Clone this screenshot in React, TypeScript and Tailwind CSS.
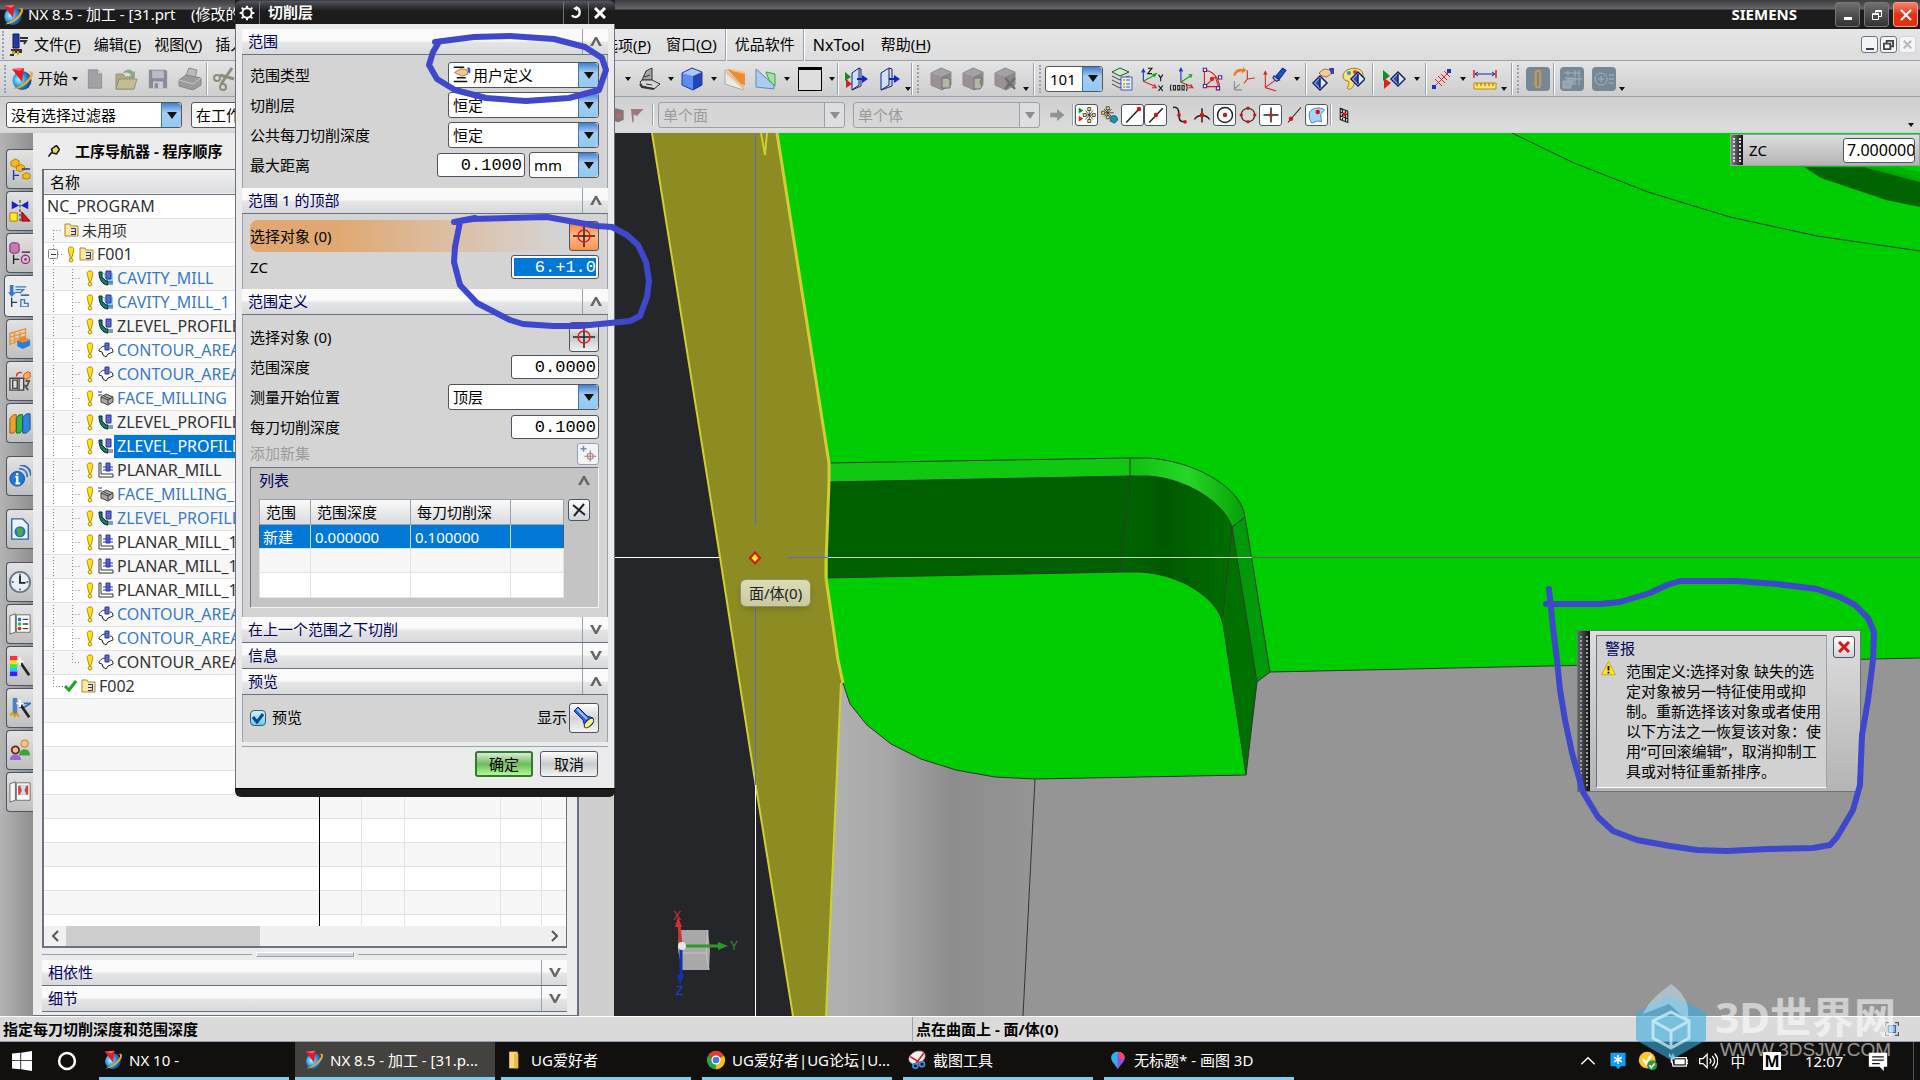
import type { ReactNode } from 'react'

type RowKind = 'root' | 'unused' | 'group' | 'op' | 'lastOp' | 'done' | 'empty'
type OpIcon = 'cavity' | 'zlevel' | 'contour' | 'face' | 'planar'

interface TreeRow {
  kind: RowKind
  label?: string
  icon?: OpIcon
  blue?: boolean
  selected?: boolean
}

const op = (icon: OpIcon, label: string, blue = false, selected = false): TreeRow => ({
  kind: 'op',
  icon,
  label,
  blue,
  selected,
})

const treeRows: TreeRow[] = [
  { kind: 'root', label: 'NC_PROGRAM' },
  { kind: 'unused', label: '未用项' },
  { kind: 'group', label: 'F001' },
  op('cavity', 'CAVITY_MILL', true),
  op('cavity', 'CAVITY_MILL_1', true),
  op('zlevel', 'ZLEVEL_PROFILE'),
  op('contour', 'CONTOUR_AREA', true),
  op('contour', 'CONTOUR_AREA', true),
  op('face', 'FACE_MILLING', true),
  op('zlevel', 'ZLEVEL_PROFILE_'),
  op('zlevel', 'ZLEVEL_PROFILE_', false, true),
  op('planar', 'PLANAR_MILL'),
  op('face', 'FACE_MILLING_C', true),
  op('zlevel', 'ZLEVEL_PROFILE_', true),
  op('planar', 'PLANAR_MILL_1'),
  op('planar', 'PLANAR_MILL_1'),
  op('planar', 'PLANAR_MILL_1'),
  op('contour', 'CONTOUR_AREA', true),
  op('contour', 'CONTOUR_AREA', true),
  { ...op('contour', 'CONTOUR_AREA'), kind: 'lastOp' },
  { kind: 'done', label: 'F002' },
  ...Array.from({ length: 10 }, (): TreeRow => ({ kind: 'empty' })),
]

function Icon({ children, className = 'size-6' }: { children: ReactNode; className?: string }) {
  return (
    <svg viewBox="0 0 24 24" className={`${className} shrink-0`} fill="none" aria-hidden="true">
      {children}
    </svg>
  )
}

function NxLogo({ className = 'size-6' }: { className?: string }) {
  return (
    <Icon className={className}>
      <defs>
        <radialGradient id="globe" cx="0.35" cy="0.45" r="0.7">
          <stop offset="0" stopColor="#bff4ff" />
          <stop offset="0.45" stopColor="#2ea3e6" />
          <stop offset="1" stopColor="#08306e" />
        </radialGradient>
      </defs>
      <circle cx="12" cy="13.500" r="9.500" fill="url(#globe)" />
      <path d="M3 22C10 23 22 15 23 7c0-3-3-3-5-2 3 0 3 2 2 4C17 15 9 20 3 22z" fill="#f5a623" />
      <path d="M2 2l12-1-2 14z" fill="#e01b2c" />
      <path d="M2 2l12-1-4 3z" fill="#ff6a6a" />
    </Icon>
  )
}

function Caret({ low = false }: { low?: boolean }) {
  return (
    <svg viewBox="0 0 6 4" className={low ? 'mt-5 h-1 w-1.5 shrink-0' : 'h-1 w-1.5 shrink-0'} aria-hidden="true">
      <path d="M0 0h6L3 4z" fill="#111" />
    </svg>
  )
}

function Grip() {
  return <span className="h-7 w-0 shrink-0 border-l-2 border-dotted border-gray-400" />
}

function Divider() {
  return <span className="h-8 w-0.5 shrink-0 border-l border-gray-400 border-r border-r-white" />
}

function ToolButton({
  label,
  w = 'w-[30px]',
  children,
}: {
  label: string
  w?: string
  children: ReactNode
}) {
  return (
    <button type="button" aria-label={label} className={`${w} flex shrink-0 items-center justify-center`}>
      {children}
    </button>
  )
}

function Combo({
  label,
  options,
  className,
  disabled = false,
  icon,
}: {
  label: string
  options: string[]
  className: string
  disabled?: boolean
  icon?: ReactNode
}) {
  return (
    <div
      className={`${className} relative h-[26px] shrink-0 rounded-[3px] border ${
        disabled ? 'border-gray-400 bg-[#d6d6d6]' : 'border-[#555] bg-white'
      }`}
    >
      {icon && <span className="pointer-events-none absolute top-0.5 left-1">{icon}</span>}
      <select
        aria-label={label}
        disabled={disabled}
        className={`h-6 w-full appearance-none bg-transparent pr-5 text-[15px] leading-[22px] outline-none ${
          icon ? 'pl-6' : 'pl-1'
        } ${disabled ? 'text-[#9a9a9a]' : 'text-black'}`}
      >
        {options.map((option) => (
          <option key={option}>{option}</option>
        ))}
      </select>
      <span
        className={`pointer-events-none absolute inset-y-0 right-0 flex w-5 items-center justify-center rounded-r-sm border-l ${
          disabled
            ? 'border-gray-400 bg-[#dedede]'
            : 'border-[#3a78b8] bg-linear-to-b from-[#3a80d2] via-[#a9ccf0] via-40% to-[#8ccbf5]'
        }`}
      >
        <svg viewBox="0 0 10 7" className="h-[7px] w-2.5">
          <path d="M0 0h10L5 7z" fill={disabled ? '#8d8d8d' : '#111'} />
        </svg>
      </span>
    </div>
  )
}

/* ---------- title bar and menus ---------- */

function TitleBar() {
  return (
    <header className="flex h-[29px] shrink-0 items-center bg-linear-to-b from-[#3d3d40] via-[#66666a] via-30% to-[#1c1c1c] to-36% px-0.5 text-white">
      <NxLogo className="h-[22px] w-[22px]" />
      <h1 className="ml-1 text-[15px] whitespace-pre">NX 8.5 - 加工 - [31.prt    (修改的</h1>
      <span className="ml-auto text-[15px] font-bold">SIEMENS</span>
      <div className="ml-[38px] flex gap-1">
        <button type="button" aria-label="最小化" className="flex h-[25px] w-[25px] items-center justify-center rounded-[3px] border border-[#777] bg-linear-to-b from-[#707070] to-[#333]">
          <span className="mt-2 h-[3px] w-2 bg-white" />
        </button>
        <button type="button" aria-label="还原" className="flex h-[25px] w-[25px] items-center justify-center rounded-[3px] border border-[#777] bg-linear-to-b from-[#707070] to-[#333]">
          <svg viewBox="0 0 12 12" className="size-3" fill="none" stroke="#fff">
            <path d="M1.500 4.500h6v6h-6zM4.500 4V1.500h6v6H8" />
            <path d="M1.500 5.500h6M4.500 2.500h6" />
          </svg>
        </button>
        <button type="button" aria-label="关闭" className="flex h-[25px] w-[25px] items-center justify-center rounded-[3px] border border-[#ff9d86] bg-linear-to-b from-[#f0806a] to-[#e03312] to-50%">
          <svg viewBox="0 0 12 12" className="size-3" stroke="#fff" strokeWidth="2">
            <path d="M1 1l10 10M11 1L1 11" />
          </svg>
        </button>
      </div>
    </header>
  )
}

function MenuItem({ text, hotkey }: { text: string; hotkey?: string }) {
  return (
    <button type="button" className="text-[15px] whitespace-nowrap">
      {text}
      {hotkey && (
        <>
          (<u className="underline-offset-2">{hotkey}</u>)
        </>
      )}
    </button>
  )
}

function MenuBar() {
  return (
    <nav className="flex h-8 shrink-0 items-center border-b border-gray-400 bg-linear-to-b from-[#e6e6e6] to-[#dcdcdc] pl-0.5 text-black">
      <Grip />
      <Icon className="ml-0.5 size-6">
        <path d="M7 1h6v14H7z" fill="#1f3d9c" stroke="#0a1a55" />
        <path d="M5 17h10v2H7v3H4" stroke="#333" strokeWidth="2" />
        <path d="M14 5h8M14 8h6l-2 3" stroke="#333" strokeWidth="2" />
        <path d="M6 18h3v3H6zM11 18h2v4h-2z" fill="#d9a400" />
      </Icon>
      <div className="ml-1 flex w-[617px] shrink-0 gap-[13px]">
        <MenuItem text="文件" hotkey="F" />
        <MenuItem text="编辑" hotkey="E" />
        <MenuItem text="视图" hotkey="V" />
        <MenuItem text="插入" />
        <span className="ml-auto">
          <MenuItem text="选项" hotkey="P" />
        </span>
      </div>
      <div className="ml-[15px] flex items-center gap-2">
        <MenuItem text="窗口" hotkey="O" />
        <Divider />
        <MenuItem text="优品软件" />
        <Divider />
        <button type="button" className="text-[16px]">
          NxTool
        </button>
        <span />
        <MenuItem text="帮助" hotkey="H" />
      </div>
      <div className="mr-1 ml-auto flex gap-0.5">
        <button type="button" aria-label="最小化文档" className="flex h-[17px] w-[17px] items-end justify-center rounded-[3px] border border-gray-500 bg-gray-100 pb-0.5">
          <span className="h-0.5 w-2 bg-gray-700" />
        </button>
        <button type="button" aria-label="还原文档" className="flex h-[17px] w-[17px] items-center justify-center rounded-[3px] border border-gray-500 bg-gray-100">
          <svg viewBox="0 0 12 12" className="size-[11px]" fill="none" stroke="#444" strokeWidth="2">
            <path d="M1 5h7v6H1zM4 4V2h7v6H9" />
          </svg>
        </button>
        <button type="button" aria-label="关闭文档" disabled className="flex h-[17px] w-[17px] items-center justify-center rounded-[3px] border border-gray-300 bg-gray-100">
          <svg viewBox="0 0 12 12" className="size-[9px]" stroke="#bbb" strokeWidth="3">
            <path d="M1 1l10 10M11 1L1 11" />
          </svg>
        </button>
      </div>
    </nav>
  )
}

/* ---------- toolbars ---------- */

function CubeIcon({ faded = false, mark }: { faded?: boolean; mark?: ReactNode }) {
  return (
    <Icon className="size-6">
      <path d="M2 6l10-5 10 4-9 4z" fill={faded ? '#a79fa6' : '#a9c4ff'} />
      <path d="M2 6l11 3v14L2 18z" fill={faded ? '#9a9097' : '#5d8cf5'} />
      <path d="M13 9l9-4v13l-9 5z" fill={faded ? '#8c8a80' : '#2146b8'} />
      <path d="M2 6l10-5 10 4v13l-9 5-11-5z" stroke={faded ? '#8d8a8b' : '#1b37a0'} />
      {mark}
    </Icon>
  )
}

function Axes({ children }: { children?: ReactNode }) {
  return (
    <Icon className="size-[26px]">
      <path d="M4 14V4M2.500 6L4 3l1.500 3" stroke="#1532c8" />
      <path d="M4 14l11-6M12 8l4-1-2 3" stroke="#0aa516" />
      <path d="M4 14l11 5M12 20l4 0-2-3" stroke="#e02020" />
      {children}
    </Icon>
  )
}

function Diamond({ x = 0, y = 0 }: { x?: number; y?: number }) {
  return (
    <g transform={`translate(${x} ${y})`}>
      <path d="M7 0l7 7-7 7-7-7z" fill="#dfeaff" stroke="#10206a" strokeWidth="1.500" />
      <path d="M7 2v10L2 7z" fill="#2850b8" />
      <path d="M7 2v10" stroke="#10206a" strokeWidth="1.500" />
    </g>
  )
}

function StandardToolbar() {
  return (
    <div className="flex h-9 shrink-0 items-center border-b border-gray-400 bg-linear-to-b from-[#e4e4e4] to-[#cdcdcd] pl-1 text-black">
      <Grip />
      <button type="button" className="ml-1 flex w-[68px] shrink-0 items-center gap-1 text-[15px] whitespace-nowrap">
        <NxLogo className="size-6" />
        <span>开始</span>
        <Caret />
      </button>
      <ToolButton label="新建" w="ml-[2px] w-[30px]">
        <Icon className="size-5">
          <path d="M4 1h11l5 5v17H4z" fill="#a1a2a8" stroke="#8b8c92" />
          <path d="M15 1v5h5" fill="#d5d6da" stroke="#8b8c92" />
        </Icon>
      </ToolButton>
      <ToolButton label="打开" w="w-8">
        <Icon className="size-6">
          <path d="M2 7h7l2 3h9v12H2z" fill="#b0aa84" stroke="#969070" />
          <path d="M5 12h18l-3 10H2z" fill="#c3bd95" stroke="#969070" />
          <path d="M9 6c2-4 8-5 10-1l2-1v6h-6l2-2c-2-3-5-3-8-2z" fill="#8ea68b" />
        </Icon>
      </ToolButton>
      <ToolButton label="保存" w="w-8">
        <Icon className="size-5">
          <path d="M1 1h20l2 2v20H1z" fill="#8a8d99" />
          <path d="M5 2h14v9H5z" fill="#b9bcc4" />
          <path d="M6 15h12v8H6z" fill="#c9cbd0" />
          <path d="M8 17h4v6H8z" fill="#8a8d99" />
        </Icon>
      </ToolButton>
      <ToolButton label="打印" w="w-8">
        <Icon className="size-6">
          <path d="M8 8l3-7 8 2-2 8z" fill="#b9b9b9" stroke="#8d8d8d" />
          <path d="M1 13l7-5 15 3v7l-8 5-14-4z" fill="#9b9b9b" stroke="#868686" />
          <path d="M1 13l14 4 8-6" stroke="#c7c7c7" />
        </Icon>
      </ToolButton>
      <Divider />
      <ToolButton label="剪切" w="w-8">
        <Icon className="size-6">
          <path d="M20 1L9 17M8 8l14 4" stroke="#8d8b7e" strokeWidth="3" />
          <circle cx="5" cy="11" r="3" stroke="#8d8b7e" strokeWidth="2" />
          <circle cx="11" cy="20" r="3" stroke="#8d8b7e" strokeWidth="2" />
        </Icon>
      </ToolButton>
      <div className="ml-[385px] flex items-center">
        <Caret />
        <ToolButton label="着色" w="ml-1 w-[30px]">
          <Icon className="size-6">
            <path d="M4 13l4-9 6-3v12z" fill="#a7a7a7" stroke="#333" />
            <path d="M2 15l2-2h10l8 4-6 5-12-3z" fill="#d5d5d5" stroke="#333" />
            <path d="M2 17l2 3 12 2" stroke="#333" strokeWidth="2" />
            <path d="M8 17l6 1M6 10l6-2" stroke="#333" />
          </Icon>
        </ToolButton>
        <ToolButton label="样式选项" w="w-3">
          <Caret />
        </ToolButton>
        <ToolButton label="视图方向" w="w-[30px]">
          <CubeIcon />
        </ToolButton>
        <ToolButton label="方向选项" w="w-3.5">
          <Caret />
        </ToolButton>
        <ToolButton label="剪切截面">
          <Icon className="size-6">
            <path d="M1 3l18 16v4L1 17z" fill="#e9e9e9" stroke="#aaa" />
            <path d="M3 2l5 1 13 3v12l-4-1z" fill="#f08a2a" />
            <path d="M8 3l13 3M3 2v4l16 15" stroke="#f7c38c" strokeWidth="2" />
          </Icon>
        </ToolButton>
        <ToolButton label="编辑截面" w="w-[30px]">
          <Icon className="size-6">
            <path d="M2 2l18 16v4L2 20z" fill="#a8cdf0" stroke="#5c8ab8" />
            <path d="M12 5l9 2v12l-6-6z" fill="#9fe2a4" stroke="#3ca34c" />
          </Icon>
        </ToolButton>
        <ToolButton label="截面选项" w="w-3">
          <Caret />
        </ToolButton>
        <ToolButton label="背景" w="w-[34px]">
          <span className="h-6 w-6 border border-t-[3px] border-black bg-[#dedede]" />
        </ToolButton>
        <ToolButton label="背景选项" w="w-2.5">
          <Caret />
        </ToolButton>
        <Divider />
        <ToolButton label="进入任务" w="w-[34px]">
          <Icon className="size-6">
            <path d="M1 5l6 5-6 4z" fill="#0c8d20" />
            <path d="M2 12l6 5-6 4z" fill="#d81f1f" />
            <path d="M8 6l7-5v17l-7 5z" fill="#cfe0ff" stroke="#15226e" />
            <path d="M15 1l2 1v17l-9 4" stroke="#15226e" />
            <path d="M13 12h6" stroke="#0b23d6" strokeWidth="2" />
            <path d="M18 8l6 4-6 4z" fill="#0b23d6" />
          </Icon>
        </ToolButton>
        <ToolButton label="退出任务" w="w-8">
          <Icon className="size-6">
            <path d="M4 6l8-5v17l-8 5z" fill="#cfe0ff" stroke="#15226e" />
            <path d="M12 1l3 1v17l-11 4" stroke="#15226e" />
            <path d="M12 12h6" stroke="#0b23d6" strokeWidth="2" />
            <path d="M17 8l6 4-6 4z" fill="#0b23d6" />
          </Icon>
        </ToolButton>
        <Caret low />
      </div>
      <div className="flex items-center gap-1">
        <Divider />
        <Grip />
        <ToolButton label="生成程序" w="ml-1 w-7">
          <CubeIcon faded mark={<path d="M13 11h6l2 2v8h-8z" fill="#b5b3aa" stroke="#6f6f6a" />} />
        </ToolButton>
        <ToolButton label="过切检查" w="w-7">
          <CubeIcon faded mark={<path d="M13 11h8l-2 4 2 4-2 3h-6z" fill="#b5b3aa" stroke="#6f6f6a" />} />
        </ToolButton>
        <ToolButton label="删除" w="w-7">
          <CubeIcon faded mark={<path d="M12 11l10 11M22 11L12 22" stroke="#6f6f6f" strokeWidth="2.500" />} />
        </ToolButton>
        <Caret low />
        <Divider />
        <Grip />
      </div>
      <Combo label="工作图层" options={['101']} className="ml-1 w-[58px]" />
      <div className="ml-1 flex items-center">
        <ToolButton label="图层设置">
          <Icon className="size-6">
            <path d="M2 5l8-4 9 4-9 4z" fill="#c7f0c9" stroke="#264c2b" />
            <path d="M2 9l8 4 9-4M2 13l8 4 6-3M2 17l8 4 3-2" stroke="#444" />
            <path d="M11 10h11v13H11z" fill="#e7edff" stroke="#4156b8" />
            <path d="M16 13h4M16 17h4M16 20h4" stroke="#4156b8" />
            <path d="M13 12h2v2h-2zM13 16h2v2h-2zM13 19h2v2h-2z" fill="#e2b400" />
          </Icon>
        </ToolButton>
        <ToolButton label="WCS 方向">
          <Axes>
            <path d="M8 2h4L8 7h4M18 8l2 3 2-3M20 11v3M18 18l4 5M22 18l-4 5" stroke="#111" />
          </Axes>
        </ToolButton>
        <ToolButton label="WCS 原点">
          <Icon className="size-[26px]">
            <path d="M11 15V3M9.500 5L11 2l1.500 3" stroke="#1532c8" />
            <path d="M11 15l9-6M18 8l3 0-1 3" stroke="#0aa516" />
            <path d="M11 15l10 4M18 20h4l-2-3" stroke="#e02020" />
            <path d="M2 17c-1 2-1 4 0 6M16 17c1 2 1 4 0 6M4 18h2v4H4zM8 18h2v4H8zM12 18h2v4h-2z" stroke="#222" />
          </Icon>
        </ToolButton>
        <ToolButton label="动态 WCS">
          <Icon className="size-[26px]">
            <path d="M5 4v15M5 4c9 1 13 8 14 15M5 19l10-9 3 9z" stroke="#c22" />
            <path d="M4 2h3v3H4zM4 17h3v3H4zM18 9h3v3h-3zM16 19h3v3h-3z" fill="#fff" stroke="#5a1d8a" />
            <circle cx="12" cy="12" r="2" fill="#d22" />
          </Icon>
        </ToolButton>
        <ToolButton label="旋转 WCS" w="w-8">
          <Icon className="size-[26px]">
            <path d="M16 12V4M16 12l7-1M16 12l-3 4" stroke="#e02a1a" />
            <path d="M4 22v-8M4 22l7 0M4 21l5-4" stroke="#888" />
            <path d="M3 9c1-6 5-7 9-6l0-2 3 3-4 3V5C8 5 6 6 5 9z" fill="#f37a1a" />
          </Icon>
        </ToolButton>
        <ToolButton label="显示 WCS">
          <Icon className="size-[26px]">
            <path d="M4 20V6M2.500 8L4 5l1.500 3M4 20l12-9M13 11l4-1-2 4M4 20l10 3" stroke="#e02020" />
            <path d="M14 9l6-7 3 2-6 8z" fill="#1f4fd2" stroke="#0b2a88" />
            <path d="M12 9l5 4-3 1-3-3z" fill="#8fd6ff" stroke="#0b2a88" />
          </Icon>
        </ToolButton>
        <ToolButton label="WCS 选项" w="w-4">
          <Caret />
        </ToolButton>
        <Divider />
        <ToolButton label="编辑显示" w="w-8">
          <Icon className="size-6">
            <Diamond x={2} y={9} />
            <path d="M8 6l5-4 6 1 2 3-5 4-5-1z" fill="#f5c99a" stroke="#a4713a" />
            <path d="M18 1l5 0v6l-3 0z" fill="#2747b8" />
          </Icon>
        </ToolButton>
        <ToolButton label="颜色" w="w-7">
          <Icon className="size-6">
            <path d="M2 9c0-9 20-11 20-1 0 7-8 5-9 9s-4 6-6 5 3-5 0-8c-3 0-5-2-5-5z" fill="#f6e07a" stroke="#a07d10" />
            <circle cx="8" cy="6" r="2" fill="#2c8ee8" />
            <circle cx="14" cy="5" r="2" fill="#e33" />
            <Diamond x={10} y={5} />
          </Icon>
        </ToolButton>
        <span className="flex w-3 justify-center">
          <Divider />
        </span>
        <ToolButton label="显示和隐藏">
          <Icon className="size-6">
            <path d="M1 3l7 6-7 5z" fill="#0d8d2b" />
            <path d="M2 11l7 5-7 6z" fill="#d22" />
            <Diamond x={9} y={5} />
          </Icon>
        </ToolButton>
        <ToolButton label="显示选项" w="w-4">
          <Caret />
        </ToolButton>
        <Divider />
        <ToolButton label="测量距离">
          <Icon className="size-6">
            <path d="M4 20L20 4" stroke="#c33" />
            <path d="M5 12l7 7M8 9l7 7M11 7l6 6M14 4l6 6" stroke="#d22" />
            <path d="M2 18h4v4H2zM17 2h4v4h-4z" fill="#1c30c8" />
          </Icon>
        </ToolButton>
        <ToolButton label="测量选项" w="w-3">
          <Caret />
        </ToolButton>
        <ToolButton label="简单距离" w="w-8">
          <Icon className="size-6">
            <path d="M1 3v8M23 3v8" stroke="#d22" strokeWidth="1.500" />
            <path d="M2 7h20M5 5L2 7l3 2M19 5l3 2-3 2" stroke="#1428b8" />
            <path d="M1 16h22v6H1z" fill="#ffe56b" stroke="#c08a00" />
            <path d="M4 16v3M8 16v3M12 16v3M16 16v3M20 16v3" stroke="#85641a" />
          </Icon>
        </ToolButton>
        <Caret low />
        <div className="ml-1 flex items-center gap-1">
          <Divider />
          <Grip />
        </div>
        <ToolButton label="模具" w="ml-1 w-[30px]">
          <Icon className="size-6">
            <rect width="24" height="24" rx="4" fill="#768896" />
            <rect x="8" y="2" width="8" height="20" rx="4" fill="#a99d7e" stroke="#8d8264" />
            <path d="M12 5v14" stroke="#8d8264" strokeWidth="2" />
          </Icon>
        </ToolButton>
        <Divider />
        <ToolButton label="电极" w="w-[34px]">
          <Icon className="size-6">
            <rect width="24" height="24" rx="4" fill="#768896" />
            <path d="M3 14h8v7H3zM5 11h8v7" stroke="#a4b1bc" fill="#93a2ae" />
            <path d="M4 6h16M8 3v6M15 3v15M19 3v15M13 12h9" stroke="#a4b1bc" />
          </Icon>
        </ToolButton>
        <ToolButton label="螺钉" w="w-[30px]">
          <Icon className="size-6">
            <rect width="24" height="24" rx="4" fill="#768896" />
            <circle cx="9" cy="12" r="6" stroke="#a4b1bc" />
            <path d="M6 12h6M9 9v6M17 8h5M17 12h5M17 16h5" stroke="#a4b1bc" />
          </Icon>
        </ToolButton>
        <Caret low />
      </div>
    </div>
  )
}

function SnapToggle({ label, pressed = false, children }: { label: string; pressed?: boolean; children: ReactNode }) {
  return (
    <button
      type="button"
      aria-label={label}
      aria-pressed={pressed}
      className={`flex h-[22px] w-[23px] shrink-0 items-center justify-center ${
        pressed ? 'rounded-[3px] border border-gray-600 bg-white' : ''
      }`}
    >
      <Icon className="size-[18px]">{children}</Icon>
    </button>
  )
}

function SelectionBar() {
  return (
    <div className="flex h-9 shrink-0 items-center border-b-2 border-gray-300 bg-linear-to-b from-[#cfcfcf] to-[#dcdcdc] pt-0.5 pl-1.5">
      <Combo label="类型过滤器" options={['没有选择过滤器']} className="w-[176px]" />
      <Combo label="选择范围" options={['在工作部件内']} className="ml-[9px] w-[176px]" />
      <div className="ml-[242px] flex items-center">
        <Icon className="size-4">
          <path d="M2 6l8-4 12 3v14l-8 4-12-4z" fill="#7f7777" />
          <circle cx="15" cy="13" r="4" fill="#b36a72" />
        </Icon>
        <Icon className="ml-1 size-4">
          <path d="M3 3h19l-9 9v2L7 11v12H5z" fill="#a07680" />
        </Icon>
      </div>
      <span className="ml-[7px]">
        <Divider />
      </span>
      <Combo label="面规则" options={['单个面']} disabled className="ml-1 w-[187px]" />
      <Combo label="体规则" options={['单个体']} disabled className="ml-2 w-[187px]" />
      <Icon className="ml-2 size-[18px]">
        <path d="M3 9h9V4l10 8-10 8v-5H3z" fill="#8c9494" />
      </Icon>
      <span className="ml-1.5">
        <Divider />
      </span>
      <div className="ml-px flex items-center">
        <SnapToggle label="启用捕捉点" pressed>
          <path d="M1 2l6 4-6 4z" fill="#0a8f1d" />
          <path d="M1 13l6 4-6 4z" fill="#d22" />
          <path d="M15 2v20M7 12h16M10 6l10 12M20 6L10 18" stroke="#222" />
          <path d="M13 2h4v4h-4zM13 18h4v4h-4zM7 10h4v4H7zM19 10h4v4h-4z" fill="#ffe45a" stroke="#222" />
        </SnapToggle>
        <SnapToggle label="清除捕捉点">
          <path d="M9 1v16M1 9h16M4 4l10 10M14 4L4 14" stroke="#222" />
          <path d="M7 1h4v4H7zM1 7h4v4H1zM7 13h4v4H7z" fill="#ffe45a" stroke="#222" />
          <path d="M13 14c5-3 10 0 9 5l-4 4-6-3z" fill="#1f8fa5" stroke="#0b5261" />
        </SnapToggle>
        <SnapToggle label="终点" pressed>
          <path d="M3 22L20 4" stroke="#222" strokeWidth="2" />
          <circle cx="20" cy="4" r="3" fill="#d11" />
        </SnapToggle>
        <SnapToggle label="中点" pressed>
          <path d="M3 22L21 3" stroke="#222" strokeWidth="2" />
          <circle cx="12" cy="12" r="3" fill="#d11" />
        </SnapToggle>
        <SnapToggle label="控制点">
          <path d="M4 2c6-1 8 2 8 10s2 9 8 9" stroke="#222" strokeWidth="2" />
          <circle cx="12" cy="12" r="2.500" fill="#d11" />
          <circle cx="20" cy="21" r="2.500" fill="#d11" />
        </SnapToggle>
        <SnapToggle label="交点">
          <path d="M12 3v19M2 18c4-7 16-7 20 0" stroke="#222" strokeWidth="2" />
          <circle cx="12" cy="12" r="3" fill="#d11" />
        </SnapToggle>
        <SnapToggle label="圆弧中心" pressed>
          <circle cx="12" cy="12" r="10" stroke="#222" strokeWidth="2" />
          <circle cx="12" cy="12" r="3" fill="#d11" />
        </SnapToggle>
        <SnapToggle label="象限点">
          <circle cx="12" cy="12" r="9" stroke="#222" strokeWidth="1.500" />
          <path d="M10 1h4v4h-4zM10 19h4v4h-4zM1 10h4v4H1zM19 10h4v4h-4z" fill="#d11" />
        </SnapToggle>
        <SnapToggle label="现有点" pressed>
          <path d="M12 2v20M2 12h20" stroke="#222" strokeWidth="2" />
          <circle cx="12" cy="12" r="2.500" fill="#d11" />
        </SnapToggle>
        <SnapToggle label="曲线上的点">
          <path d="M4 22L21 2" stroke="#222" strokeWidth="1.500" />
          <circle cx="8" cy="17" r="3" fill="#d11" />
        </SnapToggle>
        <SnapToggle label="面上的点" pressed>
          <path d="M2 8c5-6 13-7 20-3l-5 6 1 10c-5-2-9 0-13 2-3-4-4-9-3-15z" fill="#a9d2fa" stroke="#2c62b0" />
          <circle cx="13" cy="8" r="3" fill="#d11" />
        </SnapToggle>
        <span className="ml-0.5">
          <Divider />
        </span>
        <SnapToggle label="有界栅格">
          <path d="M7 3l10 4v15L7 18zM10 4v15M14 6v15M7 8l10 4M7 13l10 4" stroke="#222" strokeWidth="1.500" />
          <circle cx="13" cy="11" r="2.500" fill="#d11" />
        </SnapToggle>
      </div>
      <span className="mr-1.5 ml-auto">
        <Caret low />
      </span>
    </div>
  )
}

/* ---------- resource bar ---------- */

const resourceIcons: Record<string, ReactNode> = {
  装配导航器: (
    <>
      <path d="M2 4l5-3 4 2v5l-5 2-4-2zM8 9l5-2 4 2v4l-5 2-4-2z" fill="#f6b81c" stroke="#b67800" />
      <path d="M15 18l4-2 4 2v4l-4 1-4-1z" fill="#f6b81c" stroke="#b67800" />
      <path d="M5 13v11M5 19h6M14 12h9" stroke="#223a9e" strokeWidth="1.500" />
    </>
  ),
  约束导航器: (
    <>
      <path d="M3 1v9l8-4zM21 1v9l-8-4z" fill="#1820d0" />
      <path d="M12 0v24" stroke="#111" strokeDasharray="3 2" />
      <path d="M1 14h8v9H1z" fill="#ffe92b" stroke="#c26a00" />
      <path d="M14 13v10h9z" fill="#d5161c" stroke="#700" />
    </>
  ),
  部件导航器: (
    <>
      <path d="M1 3c0-3 10-3 10 0v7c0 3-10 3-10 0z" fill="#c87ab4" stroke="#7a1d64" />
      <path d="M5 14v10M5 19h6M14 11h9" stroke="#223" strokeWidth="1.500" />
      <circle cx="18" cy="19" r="4.500" stroke="#a02882" strokeWidth="1.500" />
      <circle cx="18" cy="19" r="1.500" fill="#a02882" />
    </>
  ),
  工序导航器: (
    <>
      <path d="M2 0h4v8h3l-5 5-4-5h2z" fill="#3c78c8" />
      <path d="M8 2h12M8 5h9l-4 4M8 8h5" stroke="#3c78c8" strokeWidth="1.500" />
      <path d="M4 14v10M4 19h6M14 11h9" stroke="#223a6e" strokeWidth="1.500" />
      <path d="M14 16h4v4h4v4h-8z" stroke="#3c78c8" strokeWidth="1.500" />
    </>
  ),
  加工特征: (
    <>
      <path d="M1 6l17-5v9L1 18zM1 10l17-5M1 14l17-5M6 5v12M12 3v12" stroke="#f09228" strokeWidth="1.500" />
      <path d="M9 14l8-4 6 3v6l-8 4-6-3z" fill="#2a7dda" />
      <path d="M9 14l8-4 6 3-8 3z" fill="#f38a28" />
    </>
  ),
  机床导航器: (
    <>
      <path d="M1 9h15v13H1zM4 11h5v9H4zM11 9v13" fill="#ddd" stroke="#444" strokeWidth="1.500" />
      <path d="M16 5l4-3 3 1v5l-4 2-3-1z" fill="#ffb45c" stroke="#d3441a" />
      <path d="M8 7c0-4 4-5 6-4" stroke="#d22" strokeWidth="1.500" />
      <path d="M18 12h4l-2 5h-3l4 5" stroke="#555" strokeWidth="2" />
    </>
  ),
  重用库: (
    <>
      <path d="M1 7l4-4h3v16l-3 4H1z" fill="#f0a02a" stroke="#9a5600" />
      <path d="M8 7l3-4h4v16l-3 4H8z" fill="#35b54a" stroke="#126a22" />
      <path d="M15 6l4-4h4v17l-4 4h-4z" fill="#2f86dc" stroke="#0f4a8f" />
    </>
  ),
  'HD3D 工具': (
    <>
      <circle cx="9" cy="15" r="8" fill="#1f78d8" stroke="#0f4c9a" />
      <path d="M9 9v2M7 13h2v7M7 20h5" stroke="#fff" strokeWidth="2.500" />
      <path d="M11 4c6 0 9 4 9 9M12 0c8 0 12 6 12 12" stroke="#2f6fc0" strokeWidth="2" />
    </>
  ),
  浏览器: (
    <>
      <path d="M3 1h12l6 6v16H3z" fill="#eef5ff" stroke="#2f62a8" strokeWidth="1.500" />
      <circle cx="12" cy="15" r="6" fill="#2a6fc8" />
      <path d="M8 12l4-2 4 3-2 6-4 1z" fill="#42b04a" />
    </>
  ),
  历史记录: (
    <>
      <circle cx="12" cy="12" r="11" fill="#eaf0fa" stroke="#6a7688" strokeWidth="2" />
      <path d="M12 3v2M12 19v2M3 12h2M19 12h2" stroke="#333" strokeWidth="1.500" />
      <path d="M12 5v8h6" stroke="#222" strokeWidth="2" />
    </>
  ),
  系统材料: (
    <>
      <path d="M1 3l6-2v20l-6 2z" fill="#f5f5f5" stroke="#666" />
      <path d="M8 2h15v19H8z" fill="#fff" stroke="#666" />
      <path d="M15 7h6M15 12h6M15 17h6" stroke="#444" strokeWidth="1.500" />
      <circle cx="11.500" cy="7" r="2" fill="#2c6ee0" />
      <circle cx="11.500" cy="12" r="2" fill="#2dbb3a" />
      <circle cx="11.500" cy="17" r="2" fill="#e22" />
    </>
  ),
  可视化: (
    <>
      <path d="M1 1h8v5H1z" fill="#f33" />
      <path d="M1 6h8v4H1z" fill="#fd2" />
      <path d="M1 10h8v4H1z" fill="#3e3" />
      <path d="M1 14h8v4H1z" fill="#1cf" />
      <path d="M1 18h8v5H1z" fill="#32f" />
      <path d="M13 9l9 13" stroke="#222" strokeWidth="3" />
      <path d="M12 3v8M8 7h8" stroke="#fff" strokeWidth="2" />
    </>
  ),
  加工向导: (
    <>
      <path d="M4 1h5v18H4z" fill="#4a82c8" />
      <path d="M10 7h13l-6 4h-6" stroke="#3c6ec0" strokeWidth="2" />
      <path d="M1 20l3-3 2 4 3-3 2 4" stroke="#d9a400" strokeWidth="2" />
      <path d="M13 9l9 13" stroke="#222" strokeWidth="3" />
      <path d="M12 3v8M8 7h8" stroke="#fff" strokeWidth="2" />
    </>
  ),
  角色: (
    <>
      <circle cx="17" cy="5" r="4" fill="#f6c488" stroke="#b87a1a" />
      <path d="M11 18c0-9 12-9 12 0z" fill="#3ba53b" />
      <circle cx="7" cy="12" r="4" fill="#f5b98a" stroke="#5a3020" strokeWidth="2" />
      <path d="M1 23c0-8 12-8 12 0z" fill="#9868d8" />
    </>
  ),
  主题: (
    <>
      <path d="M1 3l6-2v20l-6 2z" fill="#f5f5f5" stroke="#666" />
      <path d="M8 2h15v19H8z" fill="#fff" stroke="#666" />
      <path d="M10 5h11v10H10z" fill="#e53b2c" />
      <path d="M12 5h7l-2 5 2 5h-7l2-5z" fill="#bfe2ff" />
    </>
  ),
}

function ResourceBar() {
  return (
    <div className="flex w-[33px] shrink-0 flex-col items-end gap-0.5 bg-linear-to-r from-[#b4b4b4] to-[#8f8f8f] pt-4">
      {Object.entries(resourceIcons).map(([name, icon]) => {
        const active = name === '工序导航器'
        const spaced = name === 'HD3D 工具' || name === '浏览器' || name === '历史记录'
        return (
          <button
            key={name}
            type="button"
            aria-label={name}
            className={`flex shrink-0 items-center justify-center rounded-l-[4px] border border-r-0 border-gray-600 ${
              active ? 'h-[42px] w-[29px] bg-[#ececec]' : 'h-10 w-[27px] bg-linear-to-b from-[#e2e2e2] to-[#bfbfbf]'
            } ${spaced ? 'mt-[11px]' : ''}`}
          >
            <Icon className="size-[22px]">{icon}</Icon>
          </button>
        )
      })}
    </div>
  )
}

/* ---------- operation navigator ---------- */

function Bang() {
  return (
    <svg viewBox="0 0 8 18" className="h-[17px] w-2 shrink-0" aria-hidden="true">
      <path d="M4 1c2 0 3 1 3 3L5 12H3L1 4c0-2 1-3 3-3z" fill="#ffe21f" stroke="#b08a00" />
      <circle cx="4" cy="15" r="2" fill="#ffe21f" stroke="#b08a00" />
    </svg>
  )
}

function Folder() {
  return (
    <svg viewBox="0 0 15 14" className="h-3.5 w-[15px] shrink-0" aria-hidden="true">
      <path d="M1 1h5l1 2h7v10H1z" fill="#f9e9a0" stroke="#a88a30" />
      <path d="M7 5.500h4.500v6H7M7 8.500h4" fill="none" stroke="#1c2cc0" />
    </svg>
  )
}

function OperationIcon({ kind }: { kind: OpIcon }) {
  const tool = <path d="M8 1h5v8H8z" fill="#5a6ad0" stroke="#2b3796" />
  return (
    <svg viewBox="0 0 16 16" className="size-4 shrink-0" fill="none" aria-hidden="true">
      {kind === 'cavity' && <path d="M5 3h10v10H9z" fill="#6fe3f5" />}
      {(kind === 'cavity' || kind === 'zlevel') && (
        <>
          <path d="M1 2h3v5l4 4h2v4C4 15 1 9 1 2z" fill="#167a70" stroke="#0c2420" />
          {tool}
          <path d="M11 12h4M11 14h4" stroke="#1c2cd8" />
        </>
      )}
      {kind === 'contour' && (
        <>
          <path d="M7 4C4 4 1 7 1 9l3 1 1 3 3 2 2-3 5-2c0-3-1-4-3-4" fill="#fff" stroke="#222" />
          <path d="M7 1h4v7H7z" fill="#5a6ad0" stroke="#2b3796" />
        </>
      )}
      {kind === 'face' && (
        <>
          <path d="M3 7l5-3 7 3v5l-5 3-7-3z" fill="#a9a9a9" stroke="#444" />
          <path d="M3 7l7 3v5M10 10l5-3M6 6l6 3" stroke="#444" />
          <path d="M1 1v6M3 1v6" stroke="#2b3796" strokeDasharray="2 1" />
        </>
      )}
      {kind === 'planar' && (
        <>
          <path d="M1 1v14h14M1 1h2v11h12v3" fill="#fff" stroke="#333" />
          <path d="M8 1h4v8H8z" fill="#5a6ad0" stroke="#2b3796" />
          <path d="M5 5h10M5 8h10" stroke="#2d3bd0" />
        </>
      )}
    </svg>
  )
}

function TreeGuide({ kind }: { kind: RowKind }) {
  const dots = { stroke: '#888', strokeDasharray: '1 2' }
  if (kind === 'unused') {
    return (
      <svg viewBox="0 0 20 24" className="h-6 w-5 shrink-0" {...dots} fill="none">
        <path d="M9.500 12V24M9.500 12.500H18" />
      </svg>
    )
  }
  if (kind === 'group') {
    return (
      <svg viewBox="0 0 23 24" className="h-6 w-[23px] shrink-0" fill="none">
        <path d="M9.500 0V24M14 12.500H20" {...dots} />
        <rect x="4.500" y="7.500" width="9" height="9" rx="1" fill="#fff" stroke="#888" />
        <path d="M7 12.500h5" stroke="#333" />
      </svg>
    )
  }
  if (kind === 'done') {
    return (
      <svg viewBox="0 0 20 24" className="h-6 w-5 shrink-0" {...dots} fill="none">
        <path d="M9.500 0V12.500H19" />
      </svg>
    )
  }
  return (
    <svg viewBox="0 0 42 24" className="h-6 w-[42px] shrink-0" {...dots} fill="none">
      <path d={kind === 'lastOp' ? 'M9.500 0V24M28.500 0V12.500H37' : 'M9.500 0V24M28.500 0V24M28.500 12.500H37'} />
    </svg>
  )
}

function TreeLabel({ row }: { row: TreeRow }) {
  const isOp = row.kind === 'op' || row.kind === 'lastOp'
  if (row.kind === 'empty') return null
  return (
    <div className="flex h-[23px] items-center overflow-hidden whitespace-nowrap">
      {row.kind !== 'root' && <TreeGuide kind={row.kind} />}
      {(isOp || row.kind === 'group') && <Bang />}
      {row.kind === 'done' && (
        <svg viewBox="0 0 13 12" className="h-3 w-[13px] shrink-0" fill="none" stroke="#17a81f" strokeWidth="3">
          <path d="M1 6l4 4 7-9" />
        </svg>
      )}
      {isOp && row.icon ? (
        <span className="ml-1">
          <OperationIcon kind={row.icon} />
        </span>
      ) : (
        row.kind !== 'root' && (
          <span className={row.kind === 'unused' ? '' : 'ml-1'}>
            <Folder />
          </span>
        )
      )}
      <span
        className={`h-[23px] px-[3px] leading-[22px] ${row.kind === 'unused' ? 'text-[15px]' : 'text-[16px]'} ${
          row.selected ? 'bg-[#0078d7] text-white' : row.blue ? 'text-[#3a7ac4]' : 'text-[#333]'
        }`}
      >
        {row.label}
      </span>
    </div>
  )
}

function SectionHeader({ title, open = false }: { title: string; open?: boolean }) {
  return (
    <button
      type="button"
      aria-expanded={open}
      className="flex h-[26px] w-full shrink-0 items-center justify-between border-b border-gray-500 bg-linear-to-b from-[#fafafa] from-45% via-[#e4e5e7] via-55% to-[#d8d9db] pl-1.5 text-left text-[15px] text-[#00005a]"
    >
      <span>{title}</span>
      <span className="flex h-full w-[26px] items-center justify-center border-l border-gray-400">
        <Chevron up={open} />
      </span>
    </button>
  )
}

function Chevron({ up }: { up: boolean }) {
  return (
    <svg viewBox="0 0 12 9" className="h-[9px] w-3" fill="#666" aria-hidden="true">
      <path d={up ? 'M0 9L5 0h2l5 9H9L6 3 3 9z' : 'M0 0l5 9h2l5-9H9L6 6 3 0z'} />
    </svg>
  )
}

function Navigator() {
  return (
    <section className="flex w-[546px] shrink-0 flex-col border-r-2 border-b border-gray-500 bg-[#ebebeb] pr-2.5 pb-[3px] pl-[9px]">
      <h2 className="flex h-9 shrink-0 items-center text-[15px] font-bold text-black">
        <Icon className="ml-1.5 size-3">
          <path d="M1 23l6-8M7 8l10-7 6 8-6 9-8-2z" fill="#e8dc50" stroke="#111" strokeWidth="3" />
        </Icon>
        <span className="ml-[15px]">工序导航器 - 程序顺序</span>
      </h2>
      <div className="flex min-h-0 flex-1 flex-col border-2 border-t border-r border-gray-500 bg-white">
        <div className="min-h-0 flex-1 overflow-hidden">
          <table className="w-full table-fixed border-collapse text-[15px]">
            <colgroup>
              <col className="w-[275px]" />
              <col className="w-[42px]" />
              <col className="w-[43px]" />
              <col className="w-[96px]" />
              <col className="w-[41px]" />
              <col />
            </colgroup>
            <thead>
              <tr className="h-6 border-b border-gray-500 bg-linear-to-b from-[#f0f0f0] to-[#dcdddf]">
                <th colSpan={6} className="h-6 p-0 pl-1.5 text-left leading-[22px] font-normal">
                  名称
                </th>
              </tr>
            </thead>
            <tbody>
              {treeRows.map((row, index) => (
                <tr key={index} className="h-6 border-b border-[#e3e3e3] even:bg-[#f7f7f7]">
                  <td className="h-6 p-0">
                    <TreeLabel row={row} />
                  </td>
                  <td className="border-l border-black" />
                  <td className="border-l border-[#e3e3e3]" />
                  <td className="border-l border-[#e3e3e3]" />
                  <td className="border-l border-[#e3e3e3]" />
                  <td className="border-l border-[#e3e3e3]" />
                </tr>
              ))}
            </tbody>
          </table>
        </div>
        <div className="flex h-5 shrink-0 items-center bg-[#f0f0f0] text-gray-700">
          <svg viewBox="0 0 8 12" className="mx-[7px] h-3 w-2" fill="none" stroke="#555" strokeWidth="2">
            <path d="M7 1L2 6l5 5" />
          </svg>
          <span className="h-full w-[194px] bg-[#cdcdcd]" />
          <svg viewBox="0 0 8 12" className="mr-[7px] ml-auto h-3 w-2" fill="none" stroke="#555" strokeWidth="2">
            <path d="M1 1l5 5-5 5" />
          </svg>
        </div>
      </div>
      <div className="flex h-3 shrink-0 items-center justify-between gap-1">
        <span className="h-px flex-1 bg-gray-400" />
        <span className="h-[5px] w-[98px] border border-gray-400 border-t-white border-l-white bg-gray-300" />
        <span className="h-px flex-1 bg-gray-400" />
      </div>
      <SectionHeader title="相依性" />
      <SectionHeader title="细节" />
    </section>
  )
}

/* ---------- cutting levels dialog ---------- */

function Field({ label, children }: { label: string; children: ReactNode }) {
  return (
    <label className="flex h-[30px] items-center justify-between">
      <span>{label}</span>
      {children}
    </label>
  )
}

function NumberBox({ value, selected = false }: { value: string; selected?: boolean }) {
  return (
    <span className="flex h-6 w-[88px] rounded-[3px] border border-gray-600 bg-white p-0.5">
      <input
        defaultValue={value}
        className={`h-full w-full text-right font-['Liberation_Mono','Noto_Sans_CJK_SC',monospace] text-[17px] outline-none ${
          selected ? 'bg-[#0078d7] text-white' : 'text-black'
        }`}
      />
    </span>
  )
}

function TargetIcon() {
  return (
    <Icon className="size-6">
      <path d="M12 1v22M1 12h22" stroke="#222" strokeWidth="1.500" />
      <circle cx="12" cy="12" r="6" stroke="#e01b1b" strokeWidth="1.500" />
    </Icon>
  )
}

const bodyClass = 'border border-gray-400 border-t-0 border-b-0 bg-[#d4d4d4] pr-2 pl-[7px]'

function CuttingLevelDialog() {
  return (
    <section
      role="dialog"
      aria-label="切削层"
      className="absolute top-0 left-[235px] flex w-[380px] flex-col rounded-b-md bg-[#1c1c1c] text-[15px] text-black"
    >
      <div className="flex h-6 items-center rounded-t-md border-t border-gray-700 bg-linear-to-b from-[#55555a] to-[#1c1c1c] to-45% text-white">
        <Icon className="mx-1 size-4">
          <circle cx="12" cy="12" r="7" stroke="#fff" strokeWidth="3" />
          <path d="M12 1v4M12 19v4M1 12h4M19 12h4M4 4l3 3M17 17l3 3M20 4l-3 3M7 17l-3 3" stroke="#fff" strokeWidth="3" />
        </Icon>
        <h2 className="h-full flex-1 border-l border-gray-500 pl-2 leading-[23px] font-bold">切削层</h2>
        <button type="button" aria-label="重置" className="flex h-full w-[25px] items-center justify-center border-l border-gray-500">
          <Icon className="size-3.5">
            <path d="M12 3c8 1 9 14-1 16-3 0-5-1-6-3" stroke="#fff" strokeWidth="4" />
            <path d="M14 0v9l-7-5z" fill="#fff" />
          </Icon>
        </button>
        <button type="button" aria-label="关闭对话框" className="flex h-full w-[27px] items-center justify-center border-l border-gray-500 pr-1">
          <svg viewBox="0 0 12 12" className="size-3" stroke="#fff" strokeWidth="3">
            <path d="M1 1l10 10M11 1L1 11" />
          </svg>
        </button>
      </div>
      <div className="border-x border-gray-500 bg-[#ebebeb] px-1.5 pt-[5px] pb-[11px]">
        <SectionHeader title="范围" open />
        <div className={`${bodyClass} h-[133px] pt-[5px]`}>
          <Field label="范围类型">
            <Combo
              label="范围类型"
              options={['用户定义']}
              className="w-[151px]"
              icon={
                <Icon className="size-[18px]">
                  <path d="M1 3h14M1 22h18M5 17h12" stroke="#111" strokeWidth="2" />
                  <path d="M2 10l8-5 8 1 2 6-8 3z" fill="#f3c396" stroke="#9a6a34" />
                  <path d="M19 3l4 1v7l-3-1z" fill="#2b53c4" />
                </Icon>
              }
            />
          </Field>
          <Field label="切削层">
            <Combo label="切削层" options={['恒定']} className="w-[151px]" />
          </Field>
          <Field label="公共每刀切削深度">
            <Combo label="公共每刀切削深度" options={['恒定']} className="w-[151px]" />
          </Field>
          <div className="flex items-center gap-1">
            <div className="flex-1">
              <Field label="最大距离">
                <NumberBox value="0.1000" />
              </Field>
            </div>
            <Combo label="单位" options={['mm']} className="w-[70px]" />
          </div>
        </div>

        <SectionHeader title="范围 1 的顶部" open />
        <div className={`${bodyClass} h-[75px] pt-1.5`}>
          <div className="flex h-8 items-center justify-between rounded-lg bg-linear-to-r from-[#e0a870] from-25% to-[#d4d4d4] to-90%">
            <span>选择对象 (0)</span>
            <button type="button" aria-label="选择顶部对象" className="flex h-[30px] w-[30px] items-center justify-center rounded-[3px] border border-gray-600 bg-linear-to-b from-[#ff7a24] via-[#ffb98c] to-[#ff9046]">
              <TargetIcon />
            </button>
          </div>
          <Field label="ZC">
            <NumberBox value="6.+1.0" selected />
          </Field>
        </div>

        <SectionHeader title="范围定义" open />
        <div className={`${bodyClass} h-[302px] pt-[7px]`}>
          <div className="flex h-[30px] items-center justify-between">
            <span>选择对象 (0)</span>
            <button type="button" aria-label="选择范围对象" className="flex h-[30px] w-[30px] items-center justify-center rounded-[3px] border border-gray-600 bg-linear-to-b from-white via-[#c6c6c6] to-[#f2f2f2]">
              <TargetIcon />
            </button>
          </div>
          <Field label="范围深度">
            <NumberBox value="0.0000" />
          </Field>
          <Field label="测量开始位置">
            <Combo label="测量开始位置" options={['顶层']} className="w-[151px]" />
          </Field>
          <Field label="每刀切削深度">
            <NumberBox value="0.1000" />
          </Field>
          <div className="mb-0.5 flex h-[23px] items-center justify-between text-[#9b9b9b]">
            <span>添加新集</span>
            <button type="button" aria-label="添加新集" disabled className="flex h-[22px] w-[22px] items-center justify-center rounded-[3px] border border-gray-400 bg-gray-100">
              <Icon className="size-[18px]">
                <path d="M6 1v8M2 5h8" stroke="#7d8db0" strokeWidth="2" />
                <path d="M15 7v15M7 15h16" stroke="#8a8a8a" strokeWidth="1.500" />
                <circle cx="15" cy="15" r="4" stroke="#c07a7a" strokeWidth="1.500" />
              </Icon>
            </button>
          </div>
          <div className="h-[141px] border border-gray-500 border-r-gray-100 border-b-gray-100 bg-[#c4c4c4] px-2">
            <div className="flex h-[31px] items-center justify-between pb-1.5 text-[#00005a]">
              <span>列表</span>
              <Chevron up />
            </div>
            <div className="flex items-start gap-1">
              <table className="w-[306px] table-fixed border-collapse border border-gray-600 bg-white">
                <colgroup>
                  <col className="w-[51px]" />
                  <col className="w-[100px]" />
                  <col className="w-[100px]" />
                  <col />
                </colgroup>
                <thead>
                  <tr className="h-[25px] bg-linear-to-b from-[#fafafa] to-[#d8d9db]">
                    <th className="border border-gray-400 p-0 pl-1.5 text-left font-normal">范围</th>
                    <th className="border border-gray-400 p-0 pl-1.5 text-left font-normal">范围深度</th>
                    <th className="border border-gray-400 p-0 pl-1.5 text-left font-normal">每刀切削深</th>
                    <th className="border border-gray-400 p-0" />
                  </tr>
                </thead>
                <tbody>
                  <tr className="h-6 bg-[#0078d7] text-white">
                    <td className="border-r border-gray-300 p-0 pl-[3px] leading-[22px]">新建</td>
                    <td className="border-r border-gray-300 p-0 pl-1 leading-[22px]">0.000000</td>
                    <td className="border-r border-gray-300 p-0 pl-1 leading-[22px]">0.100000</td>
                    <td />
                  </tr>
                  <tr className="h-6 bg-[#f7f7f7]">
                    <td className="border border-[#e3e3e3]" />
                    <td className="border border-[#e3e3e3]" />
                    <td className="border border-[#e3e3e3]" />
                    <td className="border border-[#e3e3e3]" />
                  </tr>
                  <tr className="h-[25px]">
                    <td className="border border-[#e3e3e3]" />
                    <td className="border border-[#e3e3e3]" />
                    <td className="border border-[#e3e3e3]" />
                    <td className="border border-[#e3e3e3]" />
                  </tr>
                </tbody>
              </table>
              <button type="button" aria-label="移除" className="flex h-[22px] w-[22px] items-center justify-center rounded-[3px] border border-gray-600 bg-linear-to-b from-white to-gray-300">
                <svg viewBox="0 0 14 14" className="size-3.5" stroke="#222" strokeWidth="2">
                  <path d="M1 2l12 10M12 1L2 13" />
                </svg>
              </button>
            </div>
          </div>
        </div>

        <SectionHeader title="在上一个范围之下切削" />
        <SectionHeader title="信息" />
        <SectionHeader title="预览" open />
        <div className={`${bodyClass} flex h-[47px] items-center justify-between pb-0.5`}>
          <label className="flex items-center gap-1.5">
            <span className="relative flex size-4">
              <input type="checkbox" defaultChecked className="peer size-4 appearance-none rounded-sm border border-gray-600 bg-linear-to-b from-[#d5ecf8] to-[#5bd0ee]" />
              <svg viewBox="0 0 12 12" className="pointer-events-none absolute top-0.5 left-0.5 hidden size-3 peer-checked:block" fill="none" stroke="#0b4a8c" strokeWidth="3">
                <path d="M1 5l4 5 6-8" />
              </svg>
            </span>
            预览
          </label>
          <div className="flex items-center gap-0.5">
            <span>显示</span>
            <button type="button" aria-label="显示" className="flex h-[30px] w-[30px] items-center justify-center rounded-[3px] border border-gray-600 bg-linear-to-b from-white via-[#d4d4d4] to-[#f2f2f2]">
              <Icon className="size-6">
                <path d="M2 5l4-4 9 9 6 2-8 9-2-7z" fill="#2d66e0" stroke="#0b2078" />
                <path d="M5 3l10 10" stroke="#9cc4ff" strokeWidth="2" />
                <ellipse cx="17" cy="17" rx="6" ry="3" transform="rotate(-45 17 17)" fill="#fff36a" stroke="#0b2078" />
              </Icon>
            </button>
          </div>
        </div>
        <div className="mt-1 flex justify-end gap-[7px] border-t border-gray-400 pt-1 pr-2.5">
          <button type="button" className="h-[26px] w-[58px] rounded-[3px] border-2 border-[#2f7d2f] bg-linear-to-b from-[#dbead8] via-[#6dbb5a] to-[#b4f79a] leading-[20px]">
            确定
          </button>
          <button type="button" className="h-[26px] w-[58px] rounded-[3px] border border-gray-600 bg-linear-to-b from-white via-[#c9cacc] to-[#f4f4f4] leading-[22px]">
            取消
          </button>
        </div>
      </div>
      <div className="h-[9px] rounded-b-md border-t border-black" />
    </section>
  )
}

/* ---------- graphics window ---------- */

function Viewport() {
  return (
    <main className="relative min-w-0 flex-1 overflow-hidden bg-[#25262a]">
      <svg viewBox="614 133 1306 883" preserveAspectRatio="xMinYMin slice" className="block h-full w-full" fill="none">
        <defs>
          <linearGradient id="cyl" x1="830" x2="1035" y1="0" y2="0" gradientUnits="userSpaceOnUse">
            <stop offset="0.050" stopColor="#b0b0b0" />
            <stop offset="0.250" stopColor="#a9a9a9" />
            <stop offset="0.600" stopColor="#8c8c8c" />
            <stop offset="1" stopColor="#959595" />
          </linearGradient>
          <linearGradient id="rim" x1="1130" x2="1245" y1="0" y2="0" gradientUnits="userSpaceOnUse">
            <stop offset="0" stopColor="#10c010" />
            <stop offset="0.500" stopColor="#26d626" />
            <stop offset="1" stopColor="#06a006" />
          </linearGradient>
          <linearGradient id="wall" x1="1121" x2="1232" y1="0" y2="0" gradientUnits="userSpaceOnUse">
            <stop offset="0" stopColor="#006400" />
            <stop offset="0.400" stopColor="#005a00" />
            <stop offset="1" stopColor="#006e00" />
          </linearGradient>
          <linearGradient id="bore" x1="1885" x2="1880" y1="168" y2="186" gradientUnits="userSpaceOnUse">
            <stop offset="0" stopColor="#00b400" />
            <stop offset="1" stopColor="#006400" />
          </linearGradient>
        </defs>
        <path
          d="M700 133H1920V659L1270 672L1257 682L1246 775L1035 779L995 777L956 770L921 759L891 744L867 725L850 704L843 683z"
          fill="#00cd00"
        />
        <path d="M1270 672L1920 658V1016H1020L1035 779L1246 775L1257 682z" fill="#959595" />
        <path d="M841 683H843L850 704L867 725L891 744L921 759L956 770L995 777L1035 779L1023 1016H826z" fill="url(#cyl)" />
        {/* pocket */}
        <path d="M828 463L1130 458V476L828 482z" fill="#10c810" />
        <path d="M1130 458H1148C1195 461 1242 488 1245 517L1232 527C1224 502 1185 478 1148 476H1130z" fill="url(#rim)" />
        <path d="M1245 517L1270 672L1257 682L1232 527z" fill="#00990a" />
        <path d="M828 482L1130 476L1121 572L828 578z" fill="#006000" />
        <path d="M1130 476H1148C1185 478 1224 502 1232 527L1223 624C1218 598 1180 574 1140 572H1121z" fill="url(#wall)" />
        <path d="M1232 527L1257 682L1246 775L1223 624z" fill="#007000" />
        <g stroke="#2e3a2e">
          <path d="M828 463L1130 458H1148C1195 461 1242 488 1245 517L1270 672L1920 658" />
          <path d="M828 482L1130 476H1148C1185 478 1224 502 1232 527L1257 682L1246 775" />
          <path d="M828 578L1121 572H1140C1180 574 1218 598 1223 624L1246 775L1035 779L995 777L956 770L921 759L891 744L867 725L850 704L843 683" />
          <path d="M1130 458V476L1121 572M1245 517L1232 527L1223 617M1270 672L1257 682M1035 779L1023 1016" />
          <path d="M1512 133L1574 163L1648 192L1730 217L1817 236L1920 251" />
        </g>
        <path d="M1804 167L1821 178L1886 200L1920 207V182L1864 167z" fill="#006400" />
        <path d="M1864 167L1920 182V172L1900 167z" fill="url(#bore)" />
        {/* highlighted face */}
        <path
          d="M652 133H777L829 463V482L827 563L826 578L834 630L843 683L841 690L826 1016H793L756 787L736 660L720 557z"
          fill="#8c8c22"
        />
        <path d="M777 133L829 463V482L826 563L826 578L838 660L843 683" stroke="#cfcf33" strokeWidth="3" />
        <path d="M652 133L720 557L736 660L756 787L793 1016M841 683L826 1016" stroke="#cfcf33" strokeWidth="2" />
        <path d="M761 133L765 155L767 133" stroke="#cfcf33" strokeWidth="2" />
        {/* crosshair */}
        <g shapeRendering="crispEdges">
          <path d="M755.500 133V525M755.500 591V785M788 557.500H828" stroke="#5c6ac0" />
          <path d="M755.500 785V1016M614 557.500H720" stroke="#fff" />
          <path d="M828 557.500H1252" stroke="#c4d6c4" />
          <path d="M1252 557.500H1920" stroke="#6f566f" />
        </g>
        <path d="M755 552.500l5 5.500-5 5.500-5-5.500z" fill="#ffee20" stroke="#e01010" strokeWidth="2" />
        {/* view triad */}
        <path d="M679 930H708L710 950L709 970H682L678 950z" fill="#a8a8a8" />
        <path d="M708 930L706 953L709 970M682 953H706" stroke="#c4c4c4" />
        <path d="M681 946L679 924" stroke="#d83030" strokeWidth="3" />
        <path d="M675 927l3-10 4 10z" fill="#d83030" />
        <path d="M681 946H720" stroke="#2b9a2b" strokeWidth="3" />
        <path d="M718 942l10 4-10 4z" fill="#2b9a2b" />
        <path d="M681 946V978" stroke="#1030b8" strokeWidth="3" />
        <path d="M677 975h7l-4 10z" fill="#1030b8" />
        <circle cx="682" cy="946" r="4" fill="#e6e6e6" />
        <g fontFamily="Liberation Sans, sans-serif" fontSize="12">
          <text x="673" y="920" fill="#d83030">X</text>
          <text x="730" y="950" fill="#2b9a2b">Y</text>
          <text x="676" y="995" fill="#1840e8">Z</text>
        </g>
      </svg>

      <div className="absolute top-px right-0 flex h-8 w-[190px] items-center border border-gray-400 bg-linear-to-b from-[#dedede] to-[#b4b4b4]">
        <span className="flex h-full w-3 items-center justify-center gap-1 bg-linear-to-r from-[#888] to-[#111]">
          <i className="h-6 border-l-2 border-dotted border-gray-300" />
          <i className="h-6 border-l-2 border-dotted border-gray-300" />
        </span>
        <label className="flex flex-1 items-center justify-between pr-1 pl-1.5 text-[15px] text-black">
          ZC
          <input defaultValue="7.000000" className="h-[25px] w-[72px] rounded-[3px] border border-gray-600 bg-white pl-[3px] text-[16px]" />
        </label>
      </div>

      <div role="tooltip" className="absolute top-[446px] left-[126px] rounded-md border border-[#8f8f6a] bg-linear-to-b from-[#dcdcb8] to-[#c9c9a0] px-2 text-[15px] leading-[26px] text-[#222] shadow-md">
        面/体(0)
      </div>

      <section
        role="alert"
        className="absolute top-[497px] right-[59px] flex w-[284px] gap-1.5 border border-gray-500 bg-linear-to-b from-[#dedede] to-[#b4b4b4] text-[15px] text-black"
      >
        <span className="flex w-3 shrink-0 items-center justify-center gap-1 bg-linear-to-r from-[#666] to-[#111]">
          <i className="h-[150px] border-l-2 border-dotted border-gray-400" />
          <i className="h-[150px] border-l-2 border-dotted border-gray-400" />
        </span>
        <div className="mt-1 mb-[3px] w-[231px] border border-gray-500 border-r-gray-400 border-b-white bg-[#d1d1d1] pb-1.5 pl-1">
          <h3 className="pl-1 leading-[25px] text-[#00005a]">警报</h3>
          <div className="flex items-start">
            <Icon className="size-[15px]">
              <path d="M12 1l11 21H1z" fill="#ffe81c" stroke="#c8a400" strokeWidth="1.500" />
              <path d="M12 8v7M12 17v3" stroke="#111" strokeWidth="3" />
            </Icon>
            <p className="ml-2.5 leading-5 whitespace-nowrap">
              范围定义:选择对象 缺失的选
              <br />
              定对象被另一特征使用或抑
              <br />
              制。重新选择该对象或者使用
              <br />
              以下方法之一恢复该对象：使
              <br />
              用“可回滚编辑”，取消抑制工
              <br />
              具或对特征重新排序。
            </p>
          </div>
        </div>
        <button type="button" aria-label="关闭警报" className="mt-[5px] flex h-[22px] w-[22px] shrink-0 items-center justify-center rounded-[3px] border border-gray-600 bg-linear-to-b from-white to-gray-300">
          <svg viewBox="0 0 12 12" className="size-3" stroke="#d81616" strokeWidth="3">
            <path d="M1 1l10 10M11 1L1 11" />
          </svg>
        </button>
      </section>
    </main>
  )
}

/* ---------- status bar and taskbar ---------- */

function StatusBar() {
  return (
    <footer className="flex h-[26px] shrink-0 items-center border-y border-t-white border-b-gray-400 bg-[#dadada] text-[15px] font-bold text-black">
      <span className="w-[912px] shrink-0 pl-[3px]">指定每刀切削深度和范围深度</span>
      <span className="flex h-full flex-1 items-center border-l border-gray-400 pl-[3px]">点在曲面上 - 面/体(0)</span>
      <Icon className="mr-[21px] size-3.5">
        <path d="M1 7V1h6M17 1h6v6M23 17v6h-6M7 23H1v-6" stroke="#555" strokeWidth="2" />
        <path d="M6 6h12v12H6z" fill="#7fb4f0" stroke="#3667a8" strokeWidth="2" />
      </Icon>
    </footer>
  )
}

const tasks: { title: string; icon: ReactNode; active?: boolean }[] = [
  { title: 'NX 10 -', icon: <NxLogo className="size-5" /> },
  { title: 'NX 8.5 - 加工 - [31.p...', icon: <NxLogo className="size-5" />, active: true },
  {
    title: 'UG爱好者',
    icon: (
      <Icon className="size-5">
        <path d="M5 2h10v20H5z" fill="#f8d775" />
        <path d="M11 4h5v18h-5z" fill="#e9bb48" />
      </Icon>
    ),
  },
  {
    title: 'UG爱好者|UG论坛|U...',
    icon: (
      <Icon className="size-5">
        <path d="M12 12L2.500 6.500A11 11 0 0 1 21.500 6.500z" fill="#e33b2e" />
        <path d="M12 12L21.500 6.500A11 11 0 0 1 12 23z" fill="#fbc116" />
        <path d="M12 12V23A11 11 0 0 1 2.500 6.500z" fill="#2ea24b" />
        <circle cx="12" cy="12" r="5.500" fill="#fff" />
        <circle cx="12" cy="12" r="4" fill="#3f7de8" />
      </Icon>
    ),
  },
  {
    title: '截图工具',
    icon: (
      <Icon className="size-5">
        <ellipse cx="12" cy="9" rx="10" ry="7" fill="#f4f4f4" stroke="#e9b4b4" transform="rotate(-25 12 9)" />
        <path d="M4 8l11 7M20 4l-9 12" stroke="#c22" strokeWidth="2" />
        <circle cx="10" cy="19" r="3" stroke="#3a8fe0" strokeWidth="2" />
        <circle cx="18" cy="17" r="3" stroke="#3a8fe0" strokeWidth="2" />
      </Icon>
    ),
  },
  {
    title: '无标题* - 画图 3D',
    icon: (
      <Icon className="size-5">
        <path d="M4 9c0-9 16-9 16 0 0 6-5 8-8 14-3-6-8-8-8-14z" fill="#8b54d8" />
        <path d="M4 9c0-5 5-7 8-7-1 7-1 14 0 21-3-6-8-8-8-14z" fill="#28b4e8" />
        <path d="M12 2c5 0 8 3 8 7 0 3-4 3-6 1z" fill="#f0476e" />
      </Icon>
    ),
  },
]

function Taskbar() {
  return (
    <nav aria-label="任务栏" className="flex h-[38px] shrink-0 items-center bg-[#12100e] text-[15px] text-white">
      <button type="button" aria-label="开始" className="flex w-11 items-center justify-center">
        <Icon className="size-5">
          <path d="M0 3l10-1v9H0zM11 2l13-2v11H11zM0 12h10v10L0 21zM11 12h13v12l-13-2z" fill="#fff" />
        </Icon>
      </button>
      <button type="button" aria-label="搜索" className="flex w-[46px] items-center justify-center">
        <Icon className="size-5">
          <circle cx="12" cy="12" r="9.500" stroke="#fff" strokeWidth="3" />
        </Icon>
      </button>
      <div className="ml-[9px] flex h-full min-w-0 gap-[11px]">
        {tasks.map((task) => (
          <button
            key={task.title}
            type="button"
            className={`flex h-full items-center gap-1.5 border-b-[3px] border-[#76cff5] pt-px text-left whitespace-nowrap ${
              task.active ? '-mx-[5px] w-[200px] bg-[#44423f] pl-[9px]' : 'w-[190px] pl-1'
            }`}
          >
            {task.icon}
            <span>{task.title}</span>
          </button>
        ))}
      </div>
      <div className="mr-1.5 ml-auto flex h-full items-center">
        <button type="button" aria-label="显示隐藏的图标" className="flex w-[30px] justify-center">
          <Icon className="size-4">
            <path d="M2 17L12 7l10 10" stroke="#fff" strokeWidth="2" />
          </Icon>
        </button>
        <span className="flex w-[30px] justify-center">
          <Icon className="size-[18px]">
            <path d="M2 1h20v18h-6l-4 4-3-4H2z" fill="#12a0f5" />
            <path d="M12 4v12M7 7l10 6M17 7L7 13" stroke="#fff" strokeWidth="2" />
          </Icon>
        </span>
        <span className="flex w-[30px] justify-center">
          <Icon className="size-5">
            <circle cx="11" cy="11" r="10" fill="#ffc627" />
            <path d="M6 10l4 5 6-10" stroke="#fff" strokeWidth="3" />
            <circle cx="17" cy="17" r="6" fill="#2b9c37" />
            <path d="M14 17l2 3 4-5" stroke="#fff" strokeWidth="2" />
          </Icon>
        </span>
        <span className="flex w-[30px] justify-center">
          <Icon className="size-5">
            <path d="M4 8h18v10H6zM22 11h2v4h-2z" stroke="#fff" strokeWidth="1.500" />
            <path d="M8 10h12v6H8z" fill="#fff" />
            <path d="M2 3v3M6 3v3M1 6h6v3H4v5" stroke="#fff" strokeWidth="1.500" />
          </Icon>
        </span>
        <span className="flex w-[30px] justify-center">
          <Icon className="size-5">
            <path d="M2 9h4l5-5v16l-5-5H2z" stroke="#fff" strokeWidth="1.500" />
            <path d="M14 9c2 2 2 4 0 6M17 6c4 4 4 8 0 12M20 3c5 6 5 12 0 18" stroke="#fff" strokeWidth="1.500" />
          </Icon>
        </span>
        <span className="w-[30px] text-center">中</span>
        <span className="mr-2 ml-2.5 flex h-[18px] w-[18px] items-center justify-center bg-white text-[16px] font-bold text-black">M</span>
        <time className="ml-4 w-11">12:07</time>
        <button type="button" aria-label="通知" className="ml-3.5 flex w-[30px] justify-center">
          <Icon className="size-5">
            <path d="M1 2h22v17h-4v5l-5-5H1z" fill="#fff" />
            <path d="M5 7h14M5 11h14M5 15h9" stroke="#12100e" strokeWidth="1.500" />
          </Icon>
        </button>
        <span className="ml-5 h-full w-px bg-gray-600" />
      </div>
    </nav>
  )
}

/* ---------- overlays ---------- */

function PenMarks() {
  return (
    <svg
      viewBox="0 0 1920 1080"
      preserveAspectRatio="xMinYMin meet"
      className="pointer-events-none absolute inset-0 h-full w-full"
      fill="none"
      stroke="#3f48cc"
      strokeWidth="6"
      strokeLinecap="round"
      strokeLinejoin="round"
      aria-hidden="true"
    >
      <path d="M435 42L474 37L510 36L554 39L585 47L602 58L606 70L599 90L569 98L526 101L486 98L455 90L437 79L429 65L433 52L439 42" />
      <path d="M454 222L475 218M460 222L455 247L454 262L460 285L477 303L510 320L523 324L553 326L580 326L630 321L640 316L647 297L649 281L646 262L638 245L627 235L612 227L597 226L547 217L473 219L454 222" />
      <path d="M1549 589L1551 608L1553 628L1557 660L1560 690L1565 720L1572 753L1583 792L1598 817L1613 831L1637 840L1670 846L1697 850L1727 851L1767 849L1813 848L1830 845L1837 837L1853 810L1860 785L1862 735L1868 700L1873 660L1874 632L1868 618L1855 605L1840 597L1817 589L1777 584L1737 581L1680 581L1667 585L1650 593L1620 602L1600 604L1546 604" />
    </svg>
  )
}

function Watermark() {
  return (
    <div className="pointer-events-none absolute right-6 bottom-5 flex items-end gap-2 text-white/55">
      <svg viewBox="0 0 72 76" className="h-[76px] w-[72px]" fill="none" aria-hidden="true">
        <path d="M36 12L71 28V56L36 76L1 56V28z" fill="#39aee0" fillOpacity="0.600" />
        <path d="M36 0C50 10 56 22 52 36L34 20L8 30C14 16 26 8 36 0z" fill="#c5ecfb" fillOpacity="0.500" />
        <path d="M36 28L54 37V54L36 64L18 54V37zM18 37l18 10 18-10M36 47v17" stroke="#d8f3ff" strokeOpacity="0.700" strokeWidth="3" />
      </svg>
      <div className="text-center">
        <p className="text-[42px] leading-[46px] font-bold">3D世界网</p>
        <p className="font-['Liberation_Sans',sans-serif] text-[19px] leading-5">WWW.3DSJW.COM</p>
      </div>
    </div>
  )
}

export default function App() {
  return (
    <div className="relative flex h-screen flex-col overflow-hidden bg-[#cfcfcf] font-['Noto_Sans','Noto_Sans_CJK_SC',sans-serif]">
      <TitleBar />
      <MenuBar />
      <StandardToolbar />
      <SelectionBar />
      <div className="flex min-h-0 flex-1">
        <ResourceBar />
        <Navigator />
        <div className="w-[35px] shrink-0 bg-[#cfcfcf]" />
        <Viewport />
      </div>
      <StatusBar />
      <Taskbar />
      <CuttingLevelDialog />
      <Watermark />
      <PenMarks />
    </div>
  )
}
